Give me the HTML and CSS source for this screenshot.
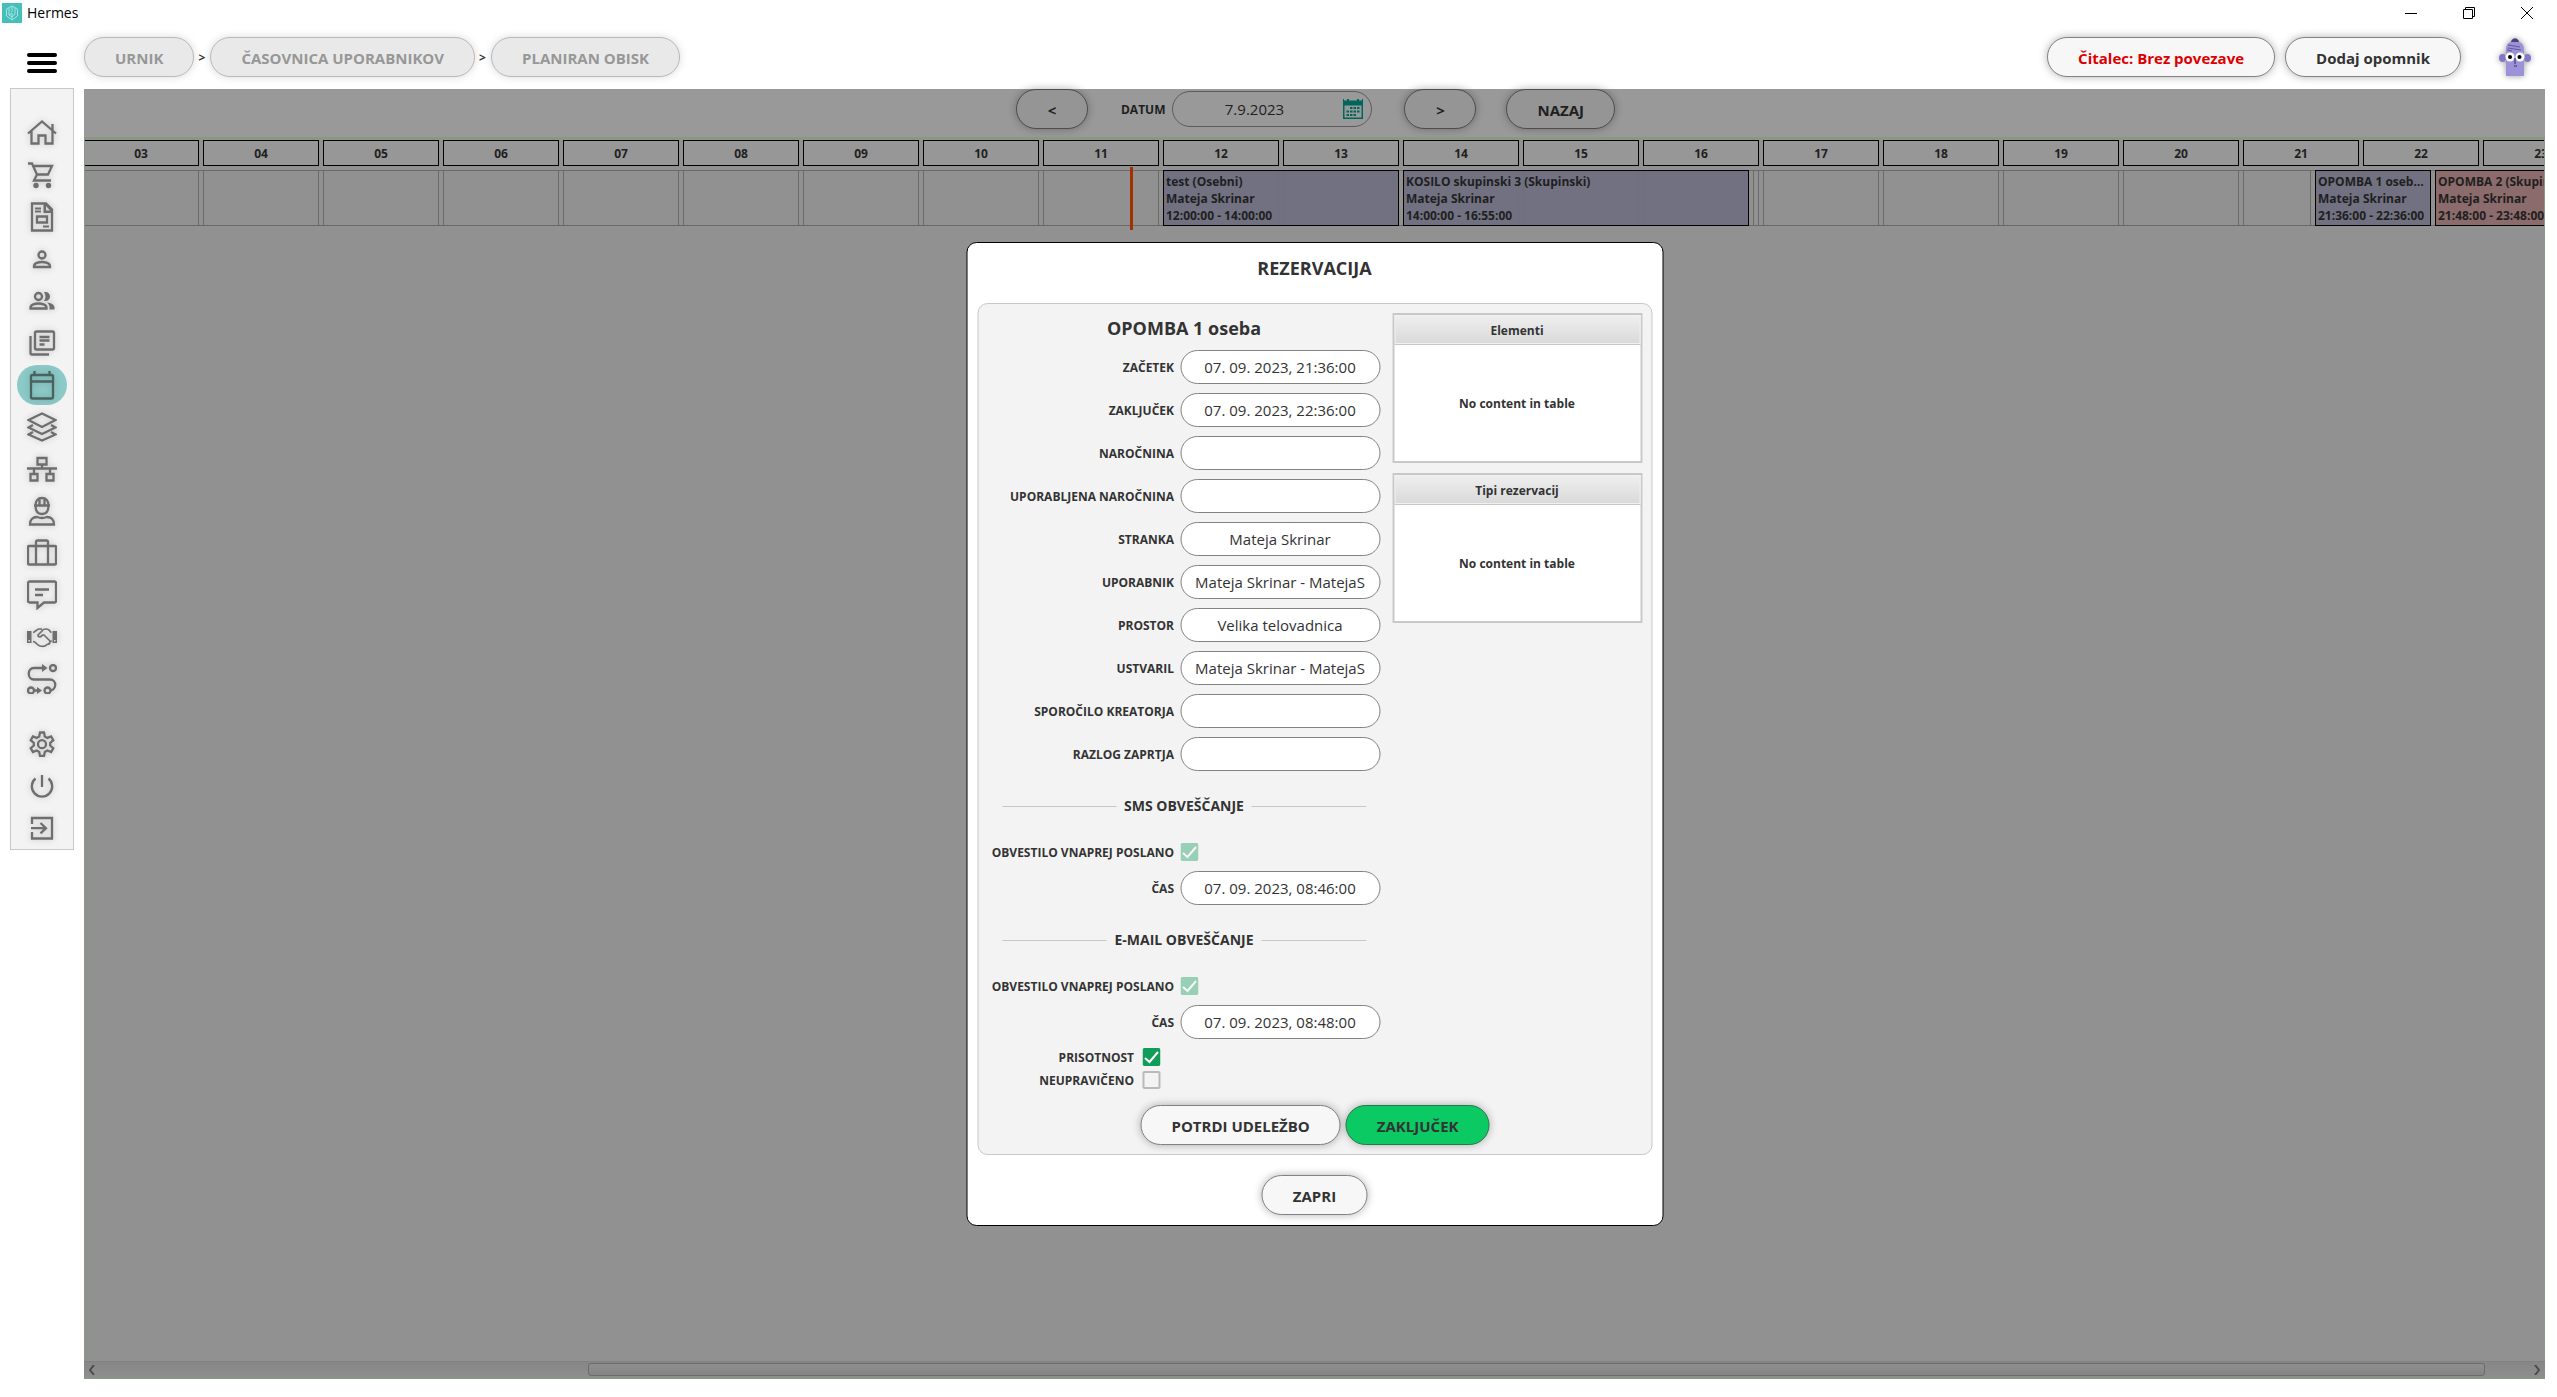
FILE: index.html
```html
<!DOCTYPE html>
<html lang="sl">
<head>
<meta charset="utf-8">
<title>Hermes</title>
<link rel="stylesheet" href="styles.css">
</head>
<body>
<header class="titlebar">
  <svg class="logo" viewBox="0 0 20 20"><rect width="20" height="20" fill="#45bfba"/><path d="M10 3 4.500 6v7l5.500 4 5.500-4V6zM10 3v6M7 5v7l3 2 3-3V5M7 12l3-2v7" fill="none" stroke="#a4e3e0"/></svg>
  <span class="app-name">Hermes</span>
  <div class="win-controls">
    <button type="button" aria-label="Minimiraj"><svg viewBox="0 0 12 12"><path d="M0 6.500h12"/></svg></button>
    <button type="button" aria-label="Obnovi"><svg viewBox="0 0 12 12"><path d="M.5 2.500h9v9h-9zM2.500 2.500v-2h9v9h-2"/></svg></button>
    <button type="button" aria-label="Zapri okno"><svg viewBox="0 0 12 12"><path d="m0 0 12 12M12 0 0 12"/></svg></button>
  </div>
</header>

<div class="app">
  <div class="rail">
    <button type="button" class="menu" aria-label="Meni"><span></span><span></span><span></span></button>
    <nav class="sidebar">
      <a href="#" aria-label="Domov"><svg viewBox="0 0 30 30"><path d="M1 15.500 15 3.500l14 12M4.500 13v12.500h7v-8h7v8h7V13M25.500 6v6"/></svg></a>
      <a href="#" aria-label="Prodaja"><svg viewBox="0 0 30 30"><path d="M1 3.500h4l5 11h11l4-8.500H7M10 14.500 7 20.500h17"/><g class="solid"><circle cx="9" cy="25.500" r="2.700"/><circle cx="21.500" cy="25.500" r="2.700"/></g></svg></a>
      <a href="#" aria-label="Računi"><svg viewBox="0 0 30 30"><path d="M5 1.500h14l6 6v21H5zM10 14.500h10v6H10z"/><path class="solid" fill-rule="evenodd" d="M16.500 1h2.500l6 6v4h-8.500zM19 4v4.500h4z"/><path class="thin" d="M8 6.500h6M8 9.500h6M16 24.500h6"/></svg></a>
      <a href="#" aria-label="Oseba"><svg viewBox="0 0 30 30"><circle cx="15" cy="11" r="3.500"/><path d="M7 23v-1c0-3 5-4 8-4s8 1 8 4v1z"/></svg></a>
      <a href="#" aria-label="Stranke"><svg viewBox="0 0 30 30"><circle cx="11.500" cy="10.500" r="3.500"/><path d="M3.500 22.500v-1c0-3 5-4 8-4s8 1 8 4v1z"/><path class="solid" d="M17 6.200c3-1 6 1 6 4.300s-3 5.300-6 4.300c2-2.500 2-6 0-8.600zM20 16.500c4 .5 7.500 2 7.500 5v2h-5v-2c0-2-.8-3.700-2.500-5z"/></svg></a>
      <a href="#" aria-label="Katalog"><svg viewBox="0 0 30 30"><rect x="8" y="3.500" width="19" height="18" rx="1.500"/><path d="M3.500 8v17c0 1 .5 1.500 1.500 1.500h17M12.500 9h10M12.500 12.500h10M12.500 16.500h5"/></svg></a>
      <a href="#" class="active" aria-label="Urnik"><svg viewBox="0 0 30 30"><rect x="4" y="5" width="22" height="23.500" rx="1.500"/><path d="M4 11.500h22M7.500 1v4M22.500 1v4"/></svg></a>
      <a href="#" aria-label="Sloji"><svg viewBox="0 0 30 30"><path d="M15 1.500 28.500 8 15 15 1.500 8zM6 13l-4.500 2.500L15 22l13.500-6.500L24 13M6 20l-4.500 2.500L15 28.500l13.500-6L24 20"/></svg></a>
      <a href="#" aria-label="Struktura"><svg viewBox="0 0 30 30"><path d="M10.500 4h9v6.500h-9zM3.500 20h7v6.500h-7zM19.500 20h7v6.500h-7zM15 10.500v4M0 14.500h30M7 14.500V20M23 14.500V20"/></svg></a>
      <a href="#" aria-label="Delavci"><svg viewBox="0 0 30 30"><path d="M8.500 9.500C8.500 5 11 2 15 2s6.500 3 6.500 7.500C21.500 15 19 18 15 18s-6.500-3-6.500-8.500zM7 9.500h16M12.500 3v6M17.500 3v6M3 28.500c0-5 3-7.500 7-7.500 3 1.200 7 1.200 10 0 4 0 7 2.500 7 7.500z"/></svg></a>
      <a href="#" aria-label="Poslovanje"><svg viewBox="0 0 30 30"><rect x="1" y="8" width="28" height="18.500" rx="1"/><path d="M9 26V4c0-1 .5-1.500 1.500-1.500h9c1 0 1.500.5 1.500 1.500v22"/></svg></a>
      <a href="#" aria-label="Sporočila"><svg viewBox="0 0 30 30"><path d="M2.500 1.500h25c.8 0 1.500.7 1.500 1.500v18c0 .8-.7 1.500-1.500 1.500H17L10.500 28v-5.500h-8c-.8 0-1.500-.7-1.500-1.500V3c0-.8.7-1.500 1.500-1.500zM8 9.500h14M8 15h8"/></svg></a>
      <a href="#" aria-label="Partnerji"><svg viewBox="0 0 30 30"><path class="solid" fill-rule="evenodd" d="M0 9h4.500v12H0zM1.500 18v1.500H3V18zM25.500 9H30v12h-4.500zM27 18v1.500h1.500V18z"/><path class="fine" d="M6 10.500c2 0 3.500-3.500 6-3.500h3M15 8.500c2-2 6-2 7.500 0 .8 1.200 1.500 2 2 2M6 19.500c3 0 3.500 3.500 7 4.500 3 .8 5.500.2 7-1.500 2 0 3-1.500 3-3 1-.2 1.500-.5 1.500-1M16 8l-5 5c0 2.500 3 2.500 4.500 0h1.500l6 6"/></svg></a>
      <a href="#" aria-label="Procesi"><svg viewBox="0 0 30 30"><path d="M17 4H7c-7 0-7 11.500 0 11.500h16c7 0 7 10.500 0 11M8 26.500h3"/><circle cx="26" cy="4" r="3"/><circle cx="4" cy="26.500" r="3"/><circle cx="20.500" cy="26.500" r="3"/><path class="solid" d="m15 0 5.500 4L15 8zM10 23l5 3.500-5 3.500z"/></svg></a>
      <a href="#" class="settings" aria-label="Nastavitve"><svg viewBox="0 0 30 30"><path d="M13 3.500h4l.8 4 2.500 1.400 3.800-1.500 2.200 3.800L23.200 14v2.500l3.100 2.700-2.200 3.800-3.800-1.500-2.500 1.400-.8 4h-4l-.8-4-2.500-1.400L5.900 23l-2.200-3.800 3.100-2.700V14l-3.100-2.800 2.200-3.800 3.800 1.500 2.500-1.400z"/><circle cx="15" cy="15.200" r="4"/></svg></a>
      <a href="#" aria-label="Izklop"><svg viewBox="0 0 30 30"><path d="M15 4v12M8.500 7.500a10.200 10.200 0 1 0 13 0"/></svg></a>
      <a href="#" aria-label="Odjava"><svg viewBox="0 0 30 30"><path d="M5 11V5h20v20.500H5V19M4 15.200h14M13.500 10l5.500 5.200-5.500 5.200"/></svg></a>
    </nav>
  </div>

  <div class="workspace">
    <div class="topbar">
      <nav class="crumbs">
        <button type="button" class="btn" disabled>URNIK</button><span>&gt;</span>
        <button type="button" class="btn" disabled>ČASOVNICA UPORABNIKOV</button><span>&gt;</span>
        <button type="button" class="btn" disabled>PLANIRAN OBISK</button>
      </nav>
      <div class="actions">
        <button type="button" class="btn alert">Čitalec: Brez povezave</button>
        <button type="button" class="btn">Dodaj opomnik</button>
        <svg class="avatar" viewBox="0 0 32 38"><path d="M7 38V11c0-5 4-8 9-8s9 3 9 8v27z" fill="#9c92d8"/><path d="M12 4c1-5 7-5 8 0z" fill="#4a4080"/><ellipse cx="3.500" cy="20" rx="3.500" ry="4" fill="#8378c4"/><ellipse cx="28.500" cy="20" rx="3.500" ry="4" fill="#8378c4"/><path d="m9 7 12 2M9 10l13 2M8 12l5 1" stroke="#5f559c" fill="none"/><circle cx="11" cy="19" r="4.500" fill="#fff"/><circle cx="21" cy="19" r="4.500" fill="#fff"/><circle cx="11" cy="19" r="2"/><circle cx="20.500" cy="19" r="2"/><path d="M16 20v6M15 28h3" stroke="#333366" fill="none"/></svg>
      </div>
    </div>

    <main class="planner">
      <div class="toolbar">
        <button type="button" class="btn dim step">&lt;</button>
        <div class="date-field">
          <label for="datum">DATUM</label>
          <div class="date-box"><input id="datum" type="text" value="7.9.2023"><svg viewBox="0 0 20 20"><path fill="#00665c" fill-rule="evenodd" d="M0 0h1v1.500h3V0h2v1.500h8V0h2v1.500h3V0h1v20H0zM1.500 6.500v12h17v-12z"/><path fill="#00665c" d="M7 8h2.500v2H7zM10.500 8H13v2h-2.500zM14 8h2.500v2H14zM3.500 11.500H6v2H3.500zM7 11.500h2.500v2H7zM10.500 11.500H13v2h-2.500zM14 11.500h2.500v2H14zM3.500 15H6v2H3.500zM7 15h2.500v2H7zM10.500 15H13v2h-2.500z"/></svg></div>
        </div>
        <button type="button" class="btn dim step">&gt;</button>
        <button type="button" class="btn dim">NAZAJ</button>
      </div>
      <div class="timeline">
        <div class="hours"><span>03</span><span>04</span><span>05</span><span>06</span><span>07</span><span>08</span><span>09</span><span>10</span><span>11</span><span>12</span><span>13</span><span>14</span><span>15</span><span>16</span><span>17</span><span>18</span><span>19</span><span>20</span><span>21</span><span>22</span><span>23</span></div>
        <div class="lane">
          <i></i><i></i><i></i><i></i><i></i><i></i><i></i><i></i><i></i><i></i><i></i><i></i><i></i><i></i><i></i><i></i><i></i><i></i><i></i><i></i><i></i>
          <div class="gap" style="left:1670px;width:6px"></div>
          <div class="gap" style="left:2160px;width:68px"></div>
          <div class="now" style="left:1047px"></div>
          <div class="event" style="left:1080px;width:236px"><p>test (Osebni)</p><p>Mateja Skrinar</p><p>12:00:00 - 14:00:00</p></div>
          <div class="event" style="left:1320px;width:346px"><p>KOSILO skupinski 3 (Skupinski)</p><p>Mateja Skrinar</p><p>14:00:00 - 16:55:00</p></div>
          <div class="event" style="left:2232px;width:116px"><p>OPOMBA 1 oseba (Osebni)</p><p>Mateja Skrinar</p><p>21:36:00 - 22:36:00</p></div>
          <div class="event late" style="left:2352px;width:236px"><p>OPOMBA 2 (Skupinski)</p><p>Mateja Skrinar</p><p>21:48:00 - 23:48:00</p></div>
        </div>
      </div>
      <div class="scrollbar">
        <svg viewBox="0 0 6 10"><path d="M5 0 1 5l4 5"/></svg>
        <div class="track"><div class="thumb"></div></div>
        <svg viewBox="0 0 6 10"><path d="m1 0 4 5-4 5"/></svg>
      </div>

      <section class="dialog" role="dialog" aria-labelledby="dialog-title">
        <h1 id="dialog-title">REZERVACIJA</h1>
        <div class="panel">
          <div class="columns">
            <form class="form">
              <h2>OPOMBA 1 oseba</h2>
              <div class="fields">
                <label for="f1">ZAČETEK</label><input id="f1" type="text" value="07. 09. 2023, 21:36:00">
                <label for="f2">ZAKLJUČEK</label><input id="f2" type="text" value="07. 09. 2023, 22:36:00">
                <label for="f3">NAROČNINA</label><input id="f3" type="text">
                <label for="f4">UPORABLJENA NAROČNINA</label><input id="f4" type="text">
                <label for="f5">STRANKA</label><input id="f5" type="text" value="Mateja Skrinar">
                <label for="f6">UPORABNIK</label><input id="f6" type="text" value="Mateja Skrinar - MatejaS">
                <label for="f7">PROSTOR</label><input id="f7" type="text" value="Velika telovadnica">
                <label for="f8">USTVARIL</label><input id="f8" type="text" value="Mateja Skrinar - MatejaS">
                <label for="f9">SPOROČILO KREATORJA</label><input id="f9" type="text">
                <label for="f10">RAZLOG ZAPRTJA</label><input id="f10" type="text">
              </div>
              <h3>SMS OBVEŠČANJE</h3>
              <div class="fields notice">
                <label for="s1">OBVESTILO VNAPREJ POSLANO</label><input id="s1" type="checkbox" checked disabled>
                <label for="s2">ČAS</label><input id="s2" type="text" value="07. 09. 2023, 08:46:00">
              </div>
              <h3>E-MAIL OBVEŠČANJE</h3>
              <div class="fields notice">
                <label for="e1">OBVESTILO VNAPREJ POSLANO</label><input id="e1" type="checkbox" checked disabled>
                <label for="e2">ČAS</label><input id="e2" type="text" value="07. 09. 2023, 08:48:00">
              </div>
              <div class="presence">
                <label for="p1">PRISOTNOST</label><input id="p1" type="checkbox" checked>
                <label for="p2">NEUPRAVIČENO</label><input id="p2" type="checkbox">
              </div>
            </form>
            <div class="tables">
              <table><thead><tr><th>Elementi</th></tr></thead><tbody><tr><td>No content in table</td></tr></tbody></table>
              <table><thead><tr><th>Tipi rezervacij</th></tr></thead><tbody><tr><td>No content in table</td></tr></tbody></table>
            </div>
          </div>
          <div class="panel-actions">
            <button type="button" class="btn">POTRDI UDELEŽBO</button>
            <button type="button" class="btn confirm">ZAKLJUČEK</button>
          </div>
        </div>
        <button type="button" class="btn close">ZAPRI</button>
      </section>
    </main>
  </div>
</div>
</body>
</html>
```
FILE: styles.css
```css
* { box-sizing: border-box; }

body {
  margin: 0;
  height: 100vh;
  display: flex;
  flex-direction: column;
  overflow: hidden;
  background: #fff;
  color: #333;
  font: 700 12px/17px "Open Sans", "Noto Sans", sans-serif;
}

button, input { font: inherit; color: inherit; margin: 0; }
h1, h2, h3, p { margin: 0; }

/* Window title bar */
.titlebar {
  display: flex;
  align-items: center;
  height: 26px;
  padding: 0 18px 0 2px;
  color: #000;
}
.logo { width: 20px; height: 20px; }
.app-name { margin-left: 5px; font-size: 14px; font-weight: 400; line-height: 20px; }
.win-controls { display: flex; gap: 34px; margin-left: auto; }
.win-controls button { display: flex; padding: 6px; border: 0; background: none; }
.win-controls svg { width: 12px; height: 12px; fill: none; stroke: #000; }

/* Shell */
.app { flex: 1; display: flex; min-height: 0; padding: 0 12px 18px 10px; gap: 10px; }
.rail { display: flex; flex-direction: column; align-items: center; gap: 15px; padding-top: 27px; }
.menu {
  display: flex;
  flex-direction: column;
  gap: 4px;
  padding: 0;
  border: 0;
  background: none;
}
.menu span { width: 30px; height: 4px; border-radius: 2px; background: #000; }

.sidebar {
  display: flex;
  flex-direction: column;
  align-items: center;
  gap: 2px;
  width: 64px;
  padding: 24px 0 1px;
  border: 1px solid #c8c8c8;
  background: #f3f3f3;
}
.sidebar a { display: flex; align-items: center; justify-content: center; width: 50px; height: 40px; border-radius: 20px; }
.sidebar a.active { background: #8ccac7; }
.sidebar a.settings { margin-top: 23px; }
.sidebar svg {
  width: 30px;
  height: 30px;
  fill: none;
  stroke: #6e6e6e;
  stroke-width: 2.3;
  filter: drop-shadow(0 0 3px rgba(0, 0, 0, .2));
}
.sidebar .active svg { stroke: #49625f; }
.sidebar .solid { fill: #6e6e6e; stroke: none; }
.sidebar .thin { stroke-width: 2; }
.sidebar .fine { stroke-width: 1.7; }

.workspace { flex: 1; display: flex; flex-direction: column; min-width: 0; }
.topbar { display: flex; justify-content: space-between; height: 63px; padding-top: 11px; }
.crumbs, .actions { display: flex; align-items: center; height: 40px; }
.crumbs { gap: 4px; }
.crumbs span { width: 8px; }
.actions { gap: 10px; padding-right: 14px; }

.btn {
  height: 40px;
  padding: 2px 30px 0;
  border: 1px solid #828282;
  border-radius: 20px;
  background: #f7f7f7;
  box-shadow: 0 0 8px rgba(0, 0, 0, .3);
  font-size: 15px;
  line-height: 20px;
  white-space: nowrap;
}
.btn:disabled { border-color: #b9b9b9; background: #e9e9e9; color: #979797; box-shadow: 0 0 8px rgba(0, 0, 0, .15); }
.btn.alert { color: #dc0000; }
.avatar { width: 32px; height: 38px; margin-left: 28px; filter: drop-shadow(0 0 3px rgba(0, 0, 0, .4)); }

/* Planner, dimmed behind the dialog */
.planner {
  flex: 1;
  position: relative;
  display: flex;
  flex-direction: column;
  min-height: 0;
  background: #919191;
  color: #1f1f1f;
}
.toolbar {
  display: flex;
  justify-content: center;
  align-items: center;
  gap: 30px;
  height: 48px;
  padding: 0 0 8px 2px;
  background: #999;
}
.btn.dim { border-color: #4e4e4e; background: #959595; }
.step { width: 72px; padding: 2px 0 0; }
.date-field { display: flex; align-items: center; gap: 7px; margin: 0 2px 0 3px; }
.date-box {
  display: flex;
  align-items: center;
  width: 200px;
  height: 36px;
  padding-right: 8px;
  border: 1px solid #5c5c5c;
  border-radius: 18px;
}
.date-box input {
  flex: 1;
  min-width: 0;
  padding: 0 8px 0 0;
  border: 0;
  background: none;
  font-size: 15px;
  font-weight: 400;
  text-align: center;
}
.date-box svg { width: 20px; height: 20px; fill: none; }

.timeline { flex: 1; min-height: 0; overflow: hidden; border: solid #8a9786; border-width: 3px 1px 0; }
.hours, .lane { display: flex; gap: 4px; margin-left: -2px; }
.hours span {
  flex: none;
  width: 116px;
  height: 26px;
  border: 1px solid #000;
  background: #979797;
  line-height: 26px;
  text-align: center;
}
.lane { position: relative; height: 56px; margin-top: 4px; border: solid #6a6a6a; border-width: 1px 0; }
.lane i { flex: none; width: 116px; border: solid #6a6a6a; border-width: 0 1px; }
.event, .gap, .now { position: absolute; top: -1px; height: 56px; }
.gap { border: 1px solid #6a6a6a; background: #919191; }
.now { top: -4px; width: 3px; height: 63px; background: #a33000; }
.event { padding: 2px; border: 1px solid #000; background: rgba(111, 111, 128, .93); }
.event.late { background: rgba(139, 104, 104, .93); }
.event p { overflow: hidden; text-overflow: ellipsis; white-space: nowrap; }

.scrollbar {
  display: flex;
  align-items: center;
  height: 18px;
  padding: 0 5px;
  border-top: 1px solid #828282;
  border-bottom: 2px solid #8a9786;
  background: linear-gradient(#868686, #8e8e8e);
}
.scrollbar svg { width: 6px; height: 10px; fill: none; stroke: #4a4a4a; stroke-width: 2; }
.track { flex: 1; padding: 0 49px 0 493px; }
.thumb { height: 13px; border: 1px solid #6b6b6b; border-radius: 3px; background: linear-gradient(#8f8f8f, #848484); }

/* Reservation dialog */
.dialog {
  position: absolute;
  top: 153px;
  left: 50%;
  transform: translateX(-50%);
  display: flex;
  flex-direction: column;
  align-items: center;
  width: 697px;
  padding: 10px;
  border: 1px solid #000;
  border-radius: 10px;
  background: #fff;
  color: #333;
}
.dialog h1 { margin-bottom: 20px; font-size: 18px; line-height: 30px; }
.panel { width: 100%; padding: 9px 9px 9px 10px; border: 1px solid #c8c8c8; border-radius: 10px; background: #f3f3f3; }
.columns { display: flex; justify-content: space-between; }
.form { width: 392px; }
.form h2 { margin-bottom: 7px; font-size: 18px; line-height: 30px; text-align: center; }
.fields { display: grid; grid-template-columns: 1fr 200px; gap: 9px 6px; align-items: center; justify-items: end; }
.fields input[type="text"] {
  width: 200px;
  height: 34px;
  padding: 0 8px;
  border: 1px solid #828282;
  border-radius: 17px;
  background: #fff;
  font-size: 15px;
  font-weight: 400;
  text-align: center;
}
.form h3 { display: flex; align-items: center; gap: 8px; margin: 25px 14px 27px; font-size: 14px; line-height: 20px; }
.form h3::before, .form h3::after { content: ""; flex: 1; height: 1px; background: #c8c8c8; }
.notice { gap: 10px 6px; }
.form input[type="checkbox"] {
  appearance: none;
  justify-self: start;
  width: 18px;
  height: 18px;
  border: 2px solid #b9b9b9;
  border-radius: 2px;
  background: #f3f3f3;
}
.form input[type="checkbox"]:checked {
  border: 0;
  background: #0f9d58 url("data:image/svg+xml,%3Csvg xmlns='http://www.w3.org/2000/svg' viewBox='0 0 18 18'%3E%3Cpath d='M2.500 10l4.500 4 8.500-10' fill='none' stroke='white' stroke-width='2'/%3E%3C/svg%3E");
}
.form input:disabled { opacity: .4; }
.presence {
  display: grid;
  grid-template-columns: 146px 18px;
  gap: 5px 8px;
  align-items: center;
  justify-items: end;
  margin-top: 9px;
}
.tables { display: flex; flex-direction: column; gap: 10px; width: 250px; }
.tables table { width: 100%; height: 150px; border: 2px solid #c8c8c8; border-spacing: 0; background: #fff; }
.tables th { height: 30px; padding: 2px 0 0; border-bottom: 1px solid #c8c8c8; background: linear-gradient(#efefef, #d9d9d9); box-shadow: inset 0 0 0 1px #f0f0f0; }
.tables td { padding: 0; text-align: center; }
.panel-actions { display: flex; justify-content: center; gap: 5px; margin-top: 16px; }
.confirm { border-color: #257a47; background: #0bc963; }
.close { margin-top: 20px; }
```
